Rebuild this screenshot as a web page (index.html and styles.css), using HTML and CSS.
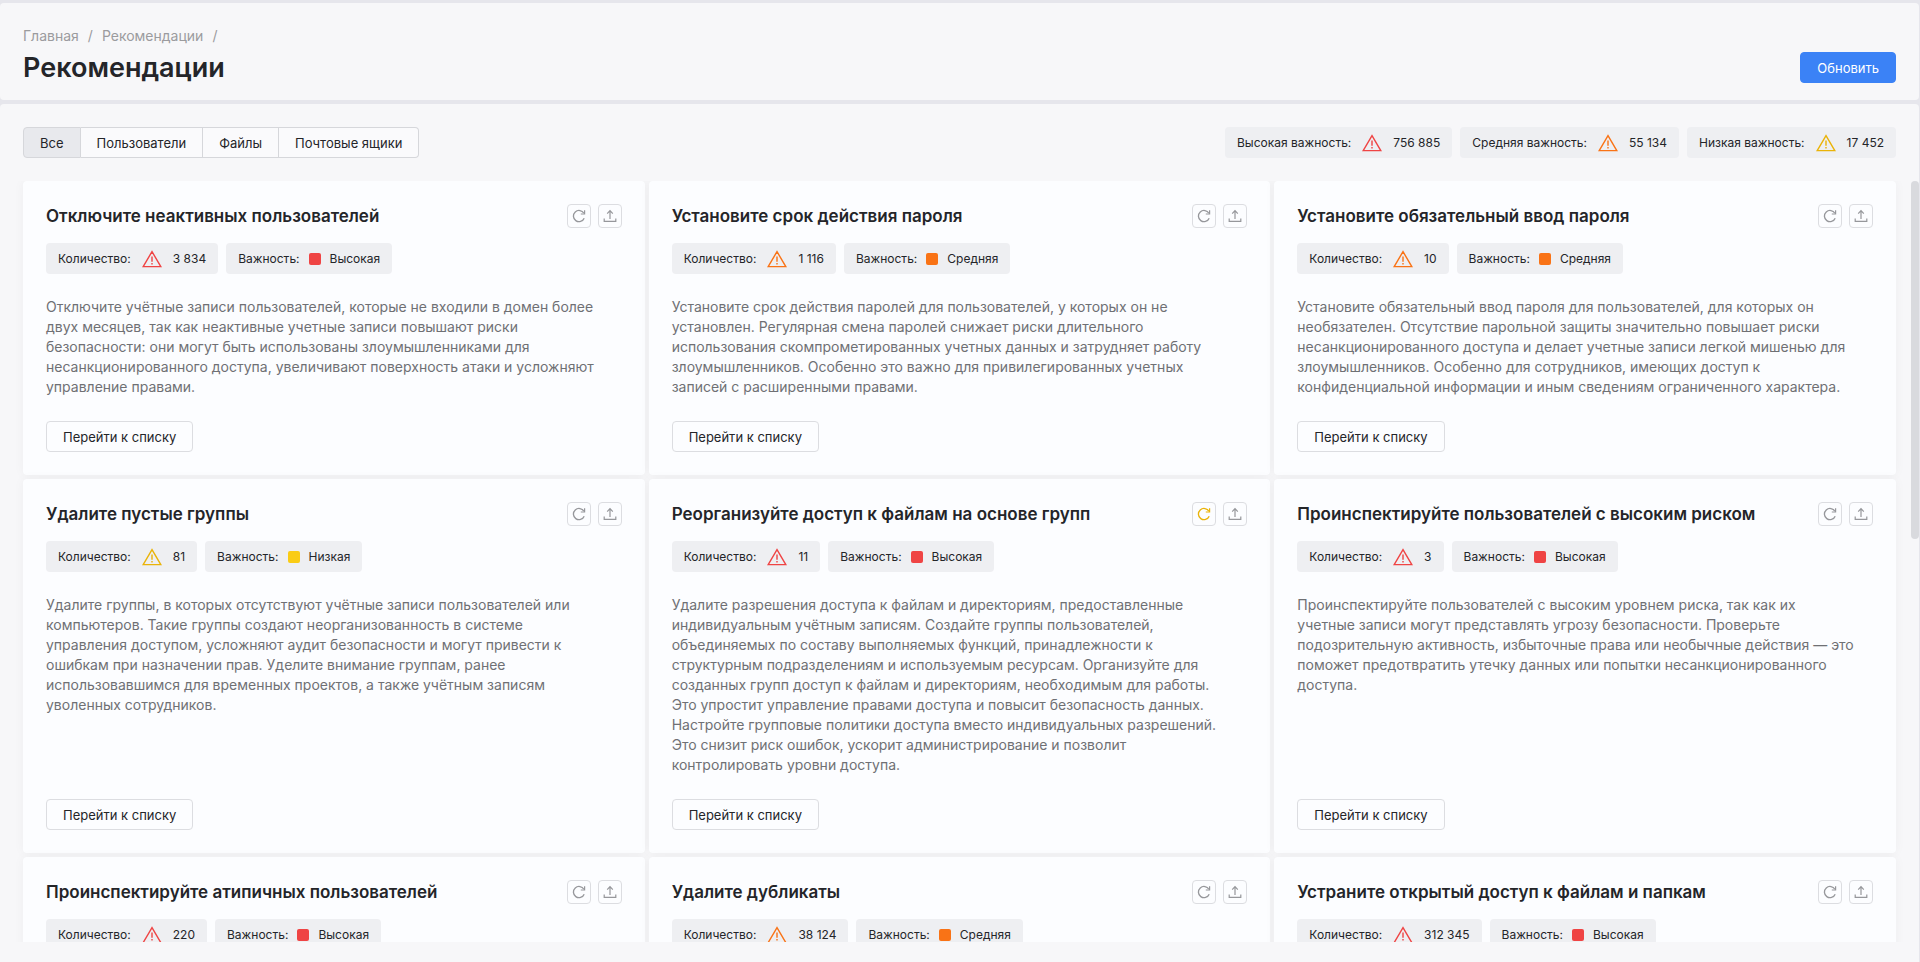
FILE: index.html
```html
<!DOCTYPE html>
<html lang="ru">
<head>
    <meta charset="UTF-8">
    <meta name="viewport" content="width=device-width, initial-scale=1.0">
    <title>Рекомендации</title>
    <link rel="stylesheet" href="styles.css">
</head>
<body>

    <!-- Icons -->
    <svg class="icon-defs" aria-hidden="true">
        <symbol id="icon-warning" viewBox="0 0 20 18">
            <path d="M10 1.6 L18.8 16.6 H1.2 Z" fill="none" stroke="currentColor" stroke-width="1.4"/>
            <path d="M10 6.6 V11.8 M10 13 V14.6" fill="none" stroke="currentColor" stroke-width="1.4"/>
        </symbol>
        <symbol id="icon-refresh" viewBox="0 0 14 14">
            <path d="M12.2 9.2 A5.6 5.6 0 1 1 11.9 4.3" fill="none" stroke="currentColor" stroke-width="1.3"/>
            <path d="M12.6 1.2 V5 H8.8" fill="none" stroke="currentColor" stroke-width="1.2"/>
        </symbol>
        <symbol id="icon-upload" viewBox="0 0 14 14">
            <path d="M7 10 V2 M4.2 4.6 L7 1.6 L9.8 4.6" fill="none" stroke="currentColor" stroke-width="1.2"/>
            <path d="M1.2 9.6 V12.4 H12.8 V9.6" fill="none" stroke="currentColor" stroke-width="1.2"/>
        </symbol>
    </svg>

    <!-- Header -->
    <header class="header">
        <div>
            <nav class="breadcrumbs">
                <a href="#">Главная</a><span>/</span><a href="#">Рекомендации</a><span>/</span>
            </nav>
            <h1>Рекомендации</h1>
        </div>
        <button type="button" class="btn btn-primary">Обновить</button>
    </header>

    <!-- Main -->
    <main class="main">
        <div class="toolbar">
            <div class="tabs">
                <button type="button" class="tab active">Все</button>
                <button type="button" class="tab">Пользователи</button>
                <button type="button" class="tab">Файлы</button>
                <button type="button" class="tab">Почтовые ящики</button>
            </div>
            <div class="chips">
                <div class="chip">Высокая важность:<svg class="warning high"><use href="#icon-warning"/></svg>756 885</div>
                <div class="chip">Средняя важность:<svg class="warning medium"><use href="#icon-warning"/></svg>55 134</div>
                <div class="chip">Низкая важность:<svg class="warning low"><use href="#icon-warning"/></svg>17 452</div>
            </div>
        </div>

        <div class="list">
            <div class="cards" id="cards">
                <!-- Cards are populated here via JS -->
            </div>
            <div class="scroll-thumb"></div>
        </div>
    </main>

    <script>
        const levels = { high: "Высокая", medium: "Средняя", low: "Низкая" };

        const recommendations = [
            { title: "Отключите неактивных пользователей", count: "3 834", level: "high", text: "Отключите учётные записи пользователей, которые не входили в домен более двух месяцев, так как неактивные учетные записи повышают риски безопасности: они могут быть использованы злоумышленниками для несанкционированного доступа, увеличивают поверхность атаки и усложняют управление правами." },
            { title: "Установите срок действия пароля", count: "1 116", level: "medium", text: "Установите срок действия паролей для пользователей, у которых он не установлен. Регулярная смена паролей снижает риски длительного использования скомпрометированных учетных данных и затрудняет работу злоумышленников. Особенно это важно для привилегированных учетных записей с расширенными правами." },
            { title: "Установите обязательный ввод пароля", count: "10", level: "medium", text: "Установите обязательный ввод пароля для пользователей, для которых он необязателен. Отсутствие парольной защиты значительно повышает риски несанкционированного доступа и делает учетные записи легкой мишенью для злоумышленников. Особенно для сотрудников, имеющих доступ к конфиденциальной информации и иным сведениям ограниченного характера." },
            { title: "Удалите пустые группы", count: "81", level: "low", text: "Удалите группы, в которых отсутствуют учётные записи пользователей или компьютеров. Такие группы создают неорганизованность в системе управления доступом, усложняют аудит безопасности и могут привести к ошибкам при назначении прав. Уделите внимание группам, ранее использовавшимся для временных проектов, а также учётным записям уволенных сотрудников." },
            { title: "Реорганизуйте доступ к файлам на основе групп", count: "11", level: "high", pending: true, text: "Удалите разрешения доступа к файлам и директориям, предоставленные индивидуальным учётным записям. Создайте группы пользователей, объединяемых по составу выполняемых функций, принадлежности к структурным подразделениям и используемым ресурсам. Организуйте для созданных групп доступ к файлам и директориям, необходимым для работы. Это упростит управление правами доступа и повысит безопасность данных. Настройте групповые политики доступа вместо индивидуальных разрешений. Это снизит риск ошибок, ускорит администрирование и позволит контролировать уровни доступа." },
            { title: "Проинспектируйте пользователей с высоким риском", count: "3", level: "high", text: "Проинспектируйте пользователей с высоким уровнем риска, так как их учетные записи могут представлять угрозу безопасности. Проверьте подозрительную активность, избыточные права или необычные действия — это поможет предотвратить утечку данных или попытки несанкционированного доступа." },
            { title: "Проинспектируйте атипичных пользователей", count: "220", level: "high", text: "" },
            { title: "Удалите дубликаты", count: "38 124", level: "medium", text: "" },
            { title: "Устраните открытый доступ к файлам и папкам", count: "312 345", level: "high", text: "" }
        ];

        const cards = document.getElementById('cards');

        recommendations.forEach(item => {
            const card = document.createElement('article');
            card.className = 'card';
            card.innerHTML = `
                <div class="card-header">
                    <h2>${item.title}</h2>
                    <button type="button" class="icon-btn ${item.pending ? 'pending' : ''}" aria-label="Обновить"><svg><use href="#icon-refresh"/></svg></button>
                    <button type="button" class="icon-btn" aria-label="Выгрузить"><svg><use href="#icon-upload"/></svg></button>
                </div>
                <div class="chips">
                    <div class="chip">Количество:<svg class="warning ${item.level}"><use href="#icon-warning"/></svg>${item.count}</div>
                    <div class="chip">Важность:<span class="square ${item.level}"></span>${levels[item.level]}</div>
                </div>
                <p>${item.text}</p>
                <button type="button" class="btn">Перейти к списку</button>`;
            cards.appendChild(card);
        });
    </script>
</body>
</html>
```
FILE: styles.css
```css
* {
    box-sizing: border-box;
}

body {
    display: flex;
    flex-direction: column;
    gap: 4px;
    height: 100vh;
    margin: 0;
    padding: 3px 1px 0 0;
    overflow: hidden;
    background-color: #e6e6ec;
    color: #242529;
    font-family: Inter, sans-serif;
    font-size: 14px;
}

button {
    font-family: inherit;
    cursor: pointer;
}

.icon-defs {
    display: none;
}

.header {
    display: flex;
    justify-content: space-between;
    align-items: flex-end;
    padding: 23px 23px 17px;
    background-color: #f7f7f9;
    border-radius: 4px;
}

.breadcrumbs {
    display: flex;
    gap: 9px;
    line-height: 20px;
    color: #9b9b9e;
}

.breadcrumbs a {
    color: inherit;
    text-decoration: none;
}

h1 {
    margin: 7px 0 0;
    font-size: 27px;
    font-weight: 600;
    line-height: 30px;
}

.btn {
    height: 31px;
    padding: 0 16px;
    background-color: #fcfdff;
    border: 1px solid #dcdde1;
    border-radius: 4px;
    color: #242529;
    font-size: 13px;
}

.btn-primary {
    background-color: #3b82f6;
    border-color: #3b82f6;
    color: white;
}

.main {
    flex: 1;
    display: flex;
    flex-direction: column;
    min-height: 0;
    padding: 23px 0 20px;
    background-color: #f7f7f9;
    border-radius: 4px 4px 0 0;
}

.toolbar {
    display: flex;
    justify-content: space-between;
    padding: 0 23px;
    margin-bottom: 23px;
}

.tabs {
    display: flex;
}

.tab {
    height: 31px;
    padding: 0 16px;
    background-color: #fafafc;
    border: 1px solid #d6d7db;
    border-left-width: 0;
    color: #242529;
    font-size: 13px;
}

.tab:first-child {
    border-left-width: 1px;
    border-radius: 4px 0 0 4px;
}

.tab:last-child {
    border-radius: 0 4px 4px 0;
}

.tab.active {
    background-color: #e8e9ed;
}

.chips {
    display: flex;
    gap: 8px;
}

.chip {
    display: flex;
    align-items: center;
    height: 31px;
    padding: 0 12px;
    background-color: #eeeff2;
    border-radius: 4px;
    font-size: 12px;
    white-space: nowrap;
}

.warning {
    width: 20px;
    height: 18px;
    margin: 0 11px;
}

.warning.high {
    color: #ef4444;
}

.warning.medium {
    color: #f97316;
}

.warning.low {
    color: #eab308;
}

.square {
    width: 12px;
    height: 12px;
    margin: 0 9px;
    border-radius: 2px;
}

.square.high {
    background-color: #ef4444;
}

.square.medium {
    background-color: #f97316;
}

.square.low {
    background-color: #facc15;
}

.list {
    position: relative;
    flex: 1;
    min-height: 0;
}

.cards {
    display: grid;
    grid-template-columns: repeat(3, 1fr);
    gap: 4px;
    height: 100%;
    padding: 0 23px;
    overflow-y: auto;
    scrollbar-width: none;
}

.scroll-thumb {
    position: absolute;
    top: 0;
    right: 0;
    width: 8px;
    height: 47%;
    background-color: #d9dade;
    border-radius: 4px;
}

.card {
    display: flex;
    flex-direction: column;
    align-items: flex-start;
    padding: 23px;
    background-color: #fcfdff;
    border-radius: 4px;
    box-shadow: 0 0 12px rgba(0, 0, 0, 0.04);
}

.card-header {
    display: flex;
    align-items: center;
    gap: 7px;
    width: 100%;
    margin-bottom: 15px;
}

h2 {
    flex: 1;
    margin: 0;
    font-size: 17px;
    font-weight: 600;
    line-height: 24px;
}

.icon-btn {
    display: flex;
    align-items: center;
    justify-content: center;
    width: 24px;
    height: 24px;
    padding: 0;
    background-color: #fcfdff;
    border: 1px solid #dcdde1;
    border-radius: 4px;
    color: #96979b;
}

.icon-btn svg {
    width: 14px;
    height: 14px;
}

.icon-btn.pending {
    color: #eab308;
}

.card p {
    flex: 1;
    margin: 23px 0 24px;
    padding-right: 16px;
    color: #6f7074;
    line-height: 20px;
}
```
